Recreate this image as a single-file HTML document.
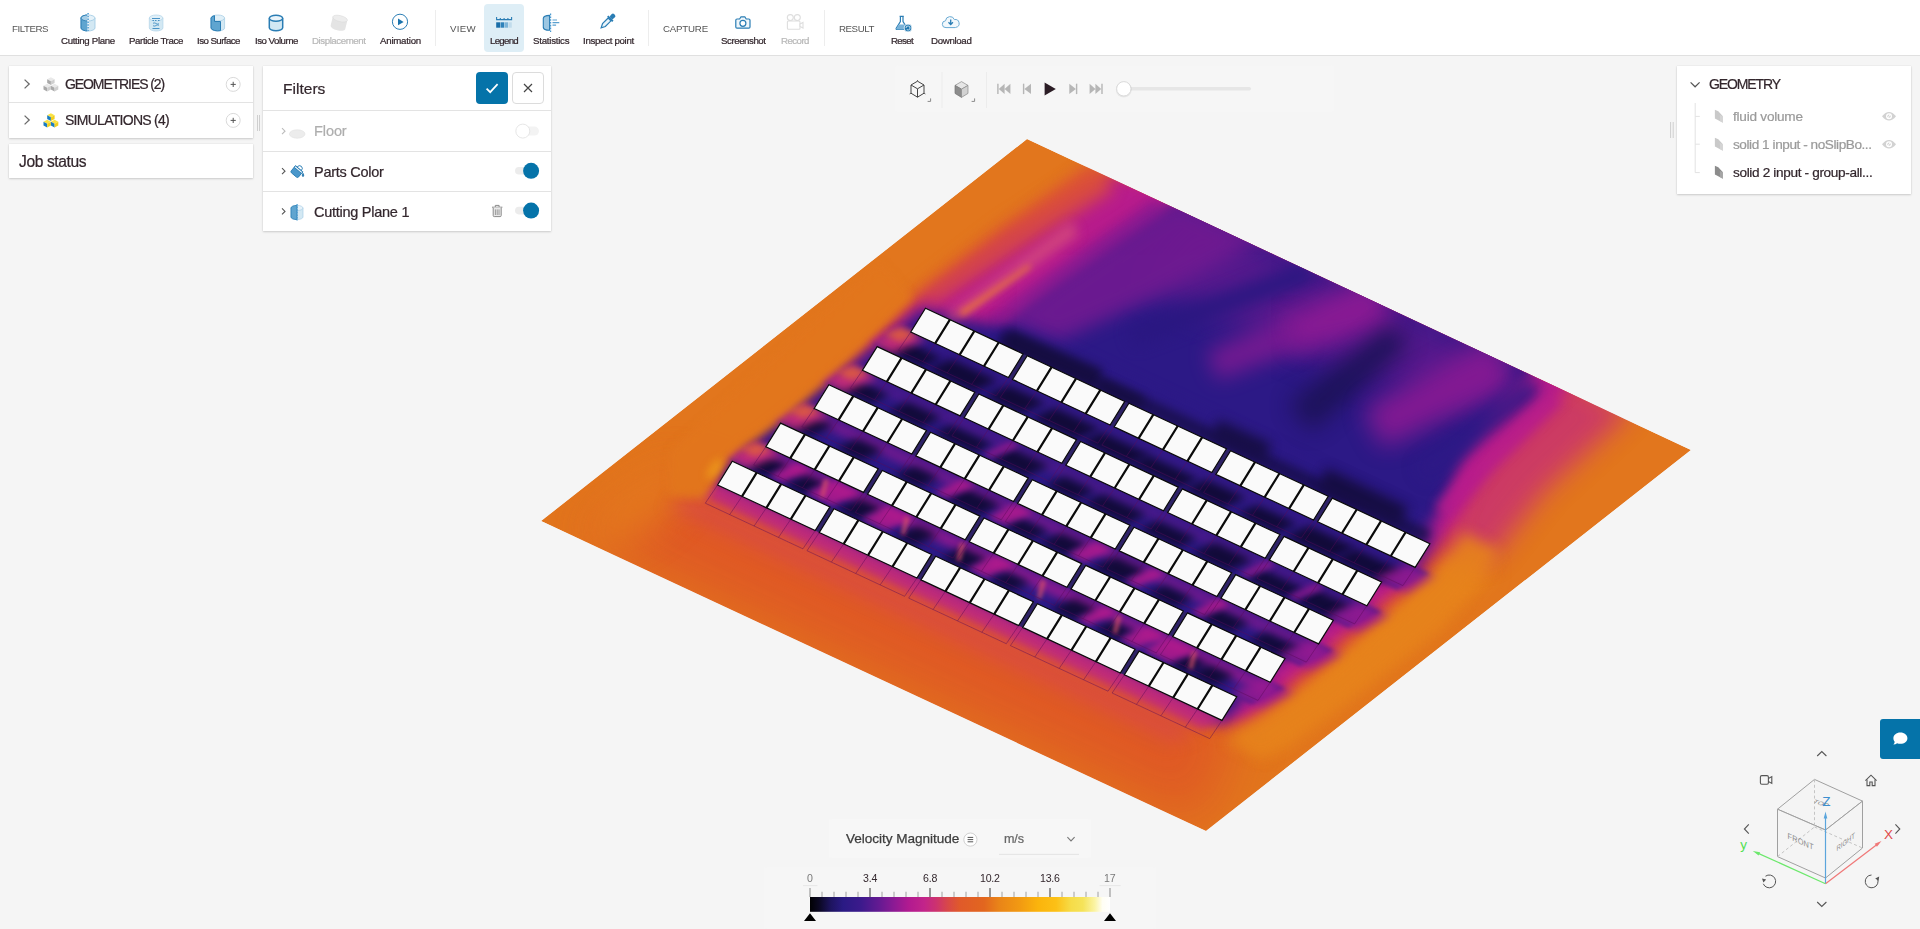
<!DOCTYPE html>
<html lang="en">
<head>
<meta charset="utf-8">
<title>Post-processor</title>
<style>
*{box-sizing:border-box;margin:0;padding:0}
html,body{width:1920px;height:929px;overflow:hidden;background:#f5f5f5;font-family:"Liberation Sans",sans-serif;color:#33272d}
.abs{position:absolute}
.t{position:absolute;white-space:nowrap;will-change:transform;-webkit-text-stroke:.22px currentColor}
#topbar{position:absolute;left:0;top:0;width:1920px;height:56px;background:#fff;border-bottom:1px solid #e0e0e0}
.sep{position:absolute;top:10px;width:1px;height:36px;background:#ededed}
.panel{position:absolute;background:#fff;box-shadow:0 1px 2px rgba(0,0,0,.16),0 0 1px rgba(0,0,0,.12)}
.hl{position:absolute;left:0;right:0;height:1px;background:#e3e3e3}
</style>
</head>
<body>

<!-- scene -->
<svg class="abs" style="left:0;top:0" width="1920" height="929" viewBox="0 0 1920 929"><defs><filter id="f0" filterUnits="userSpaceOnUse" color-interpolation-filters="sRGB" x="495" y="390" width="825" height="515"><feGaussianBlur stdDeviation="26"/></filter><filter id="f1" filterUnits="userSpaceOnUse" color-interpolation-filters="sRGB" x="534" y="407" width="211" height="196"><feGaussianBlur stdDeviation="18"/></filter><filter id="f2" filterUnits="userSpaceOnUse" color-interpolation-filters="sRGB" x="1217" y="509" width="312" height="279"><feGaussianBlur stdDeviation="12"/></filter><filter id="f3" filterUnits="userSpaceOnUse" color-interpolation-filters="sRGB" x="681" y="141" width="960" height="616"><feGaussianBlur stdDeviation="9"/></filter><filter id="f4" filterUnits="userSpaceOnUse" color-interpolation-filters="sRGB" x="1404" y="321" width="269" height="280"><feGaussianBlur stdDeviation="13"/></filter><filter id="f5" filterUnits="userSpaceOnUse" color-interpolation-filters="sRGB" x="691" y="153" width="917" height="594"><feGaussianBlur stdDeviation="7"/></filter><filter id="f6" filterUnits="userSpaceOnUse" color-interpolation-filters="sRGB" x="693" y="181" width="866" height="564"><feGaussianBlur stdDeviation="7"/></filter><filter id="f7" filterUnits="userSpaceOnUse" color-interpolation-filters="sRGB" x="1090" y="166" width="480" height="289"><feGaussianBlur stdDeviation="16"/></filter><filter id="f8" filterUnits="userSpaceOnUse" color-interpolation-filters="sRGB" x="898" y="136" width="243" height="196"><feGaussianBlur stdDeviation="8"/></filter><filter id="f9" filterUnits="userSpaceOnUse" color-interpolation-filters="sRGB" x="967" y="178" width="218" height="168"><feGaussianBlur stdDeviation="6"/></filter><filter id="f10" filterUnits="userSpaceOnUse" color-interpolation-filters="sRGB" x="927" y="202" width="172" height="140"><feGaussianBlur stdDeviation="6"/></filter><filter id="f11" filterUnits="userSpaceOnUse" color-interpolation-filters="sRGB" x="948" y="253" width="94" height="74"><feGaussianBlur stdDeviation="3"/></filter><filter id="f12" filterUnits="userSpaceOnUse" color-interpolation-filters="sRGB" x="973" y="171" width="318" height="198"><feGaussianBlur stdDeviation="9"/></filter><filter id="f13" filterUnits="userSpaceOnUse" color-interpolation-filters="sRGB" x="1102" y="236" width="238" height="137"><feGaussianBlur stdDeviation="8"/></filter><filter id="f14" filterUnits="userSpaceOnUse" color-interpolation-filters="sRGB" x="1174" y="281" width="164" height="131"><feGaussianBlur stdDeviation="10"/></filter><filter id="f15" filterUnits="userSpaceOnUse" color-interpolation-filters="sRGB" x="1249" y="240" width="180" height="146"><feGaussianBlur stdDeviation="11"/></filter><filter id="f16" filterUnits="userSpaceOnUse" color-interpolation-filters="sRGB" x="1253" y="288" width="191" height="179"><feGaussianBlur stdDeviation="11"/></filter><filter id="f17" filterUnits="userSpaceOnUse" color-interpolation-filters="sRGB" x="1325" y="301" width="229" height="185"><feGaussianBlur stdDeviation="12"/></filter><filter id="f18" filterUnits="userSpaceOnUse" color-interpolation-filters="sRGB" x="1389" y="351" width="180" height="157"><feGaussianBlur stdDeviation="8"/></filter><filter id="f19" filterUnits="userSpaceOnUse" color-interpolation-filters="sRGB" x="1415" y="369" width="168" height="168"><feGaussianBlur stdDeviation="6"/></filter><filter id="f20" filterUnits="userSpaceOnUse" color-interpolation-filters="sRGB" x="943" y="292" width="523" height="311"><feGaussianBlur stdDeviation="10"/></filter><filter id="f21" filterUnits="userSpaceOnUse" color-interpolation-filters="sRGB" x="983" y="317" width="462" height="241"><feGaussianBlur stdDeviation="4"/></filter><filter id="f22" filterUnits="userSpaceOnUse" color-interpolation-filters="sRGB" x="985" y="312" width="135" height="93"><feGaussianBlur stdDeviation="5"/></filter><filter id="f23" filterUnits="userSpaceOnUse" color-interpolation-filters="sRGB" x="1079" y="361" width="83" height="67"><feGaussianBlur stdDeviation="5"/></filter><filter id="f24" filterUnits="userSpaceOnUse" color-interpolation-filters="sRGB" x="1191" y="400" width="100" height="80"><feGaussianBlur stdDeviation="6"/></filter><filter id="f25" filterUnits="userSpaceOnUse" color-interpolation-filters="sRGB" x="1297" y="448" width="131" height="97"><feGaussianBlur stdDeviation="6"/></filter><filter id="f26" filterUnits="userSpaceOnUse" color-interpolation-filters="sRGB" x="864" y="322" width="574" height="275"><feGaussianBlur stdDeviation="2"/></filter><filter id="f27" filterUnits="userSpaceOnUse" color-interpolation-filters="sRGB" x="816" y="360" width="574" height="275"><feGaussianBlur stdDeviation="2"/></filter><filter id="f28" filterUnits="userSpaceOnUse" color-interpolation-filters="sRGB" x="768" y="398" width="574" height="275"><feGaussianBlur stdDeviation="2"/></filter><filter id="f29" filterUnits="userSpaceOnUse" color-interpolation-filters="sRGB" x="719" y="436" width="574" height="275"><feGaussianBlur stdDeviation="2"/></filter><filter id="f30" filterUnits="userSpaceOnUse" color-interpolation-filters="sRGB" x="880" y="318" width="559" height="275"><feGaussianBlur stdDeviation="4"/></filter><filter id="f31" filterUnits="userSpaceOnUse" color-interpolation-filters="sRGB" x="832" y="356" width="559" height="275"><feGaussianBlur stdDeviation="4"/></filter><filter id="f32" filterUnits="userSpaceOnUse" color-interpolation-filters="sRGB" x="783" y="394" width="559" height="275"><feGaussianBlur stdDeviation="4"/></filter><filter id="f33" filterUnits="userSpaceOnUse" color-interpolation-filters="sRGB" x="735" y="433" width="559" height="275"><feGaussianBlur stdDeviation="4"/></filter><filter id="f34" filterUnits="userSpaceOnUse" color-interpolation-filters="sRGB" x="865" y="324" width="91" height="57"><feGaussianBlur stdDeviation="4"/></filter><filter id="f35" filterUnits="userSpaceOnUse" color-interpolation-filters="sRGB" x="913" y="345" width="99" height="60"><feGaussianBlur stdDeviation="4"/></filter><filter id="f36" filterUnits="userSpaceOnUse" color-interpolation-filters="sRGB" x="970" y="372" width="90" height="56"><feGaussianBlur stdDeviation="4"/></filter><filter id="f37" filterUnits="userSpaceOnUse" color-interpolation-filters="sRGB" x="1018" y="394" width="97" height="59"><feGaussianBlur stdDeviation="4"/></filter><filter id="f38" filterUnits="userSpaceOnUse" color-interpolation-filters="sRGB" x="1067" y="418" width="97" height="60"><feGaussianBlur stdDeviation="4"/></filter><filter id="f39" filterUnits="userSpaceOnUse" color-interpolation-filters="sRGB" x="1116" y="442" width="97" height="59"><feGaussianBlur stdDeviation="4"/></filter><filter id="f40" filterUnits="userSpaceOnUse" color-interpolation-filters="sRGB" x="1170" y="465" width="90" height="56"><feGaussianBlur stdDeviation="4"/></filter><filter id="f41" filterUnits="userSpaceOnUse" color-interpolation-filters="sRGB" x="1223" y="491" width="89" height="56"><feGaussianBlur stdDeviation="4"/></filter><filter id="f42" filterUnits="userSpaceOnUse" color-interpolation-filters="sRGB" x="1271" y="512" width="99" height="60"><feGaussianBlur stdDeviation="4"/></filter><filter id="f43" filterUnits="userSpaceOnUse" color-interpolation-filters="sRGB" x="1319" y="535" width="100" height="61"><feGaussianBlur stdDeviation="4"/></filter><filter id="f44" filterUnits="userSpaceOnUse" color-interpolation-filters="sRGB" x="819" y="364" width="85" height="54"><feGaussianBlur stdDeviation="4"/></filter><filter id="f45" filterUnits="userSpaceOnUse" color-interpolation-filters="sRGB" x="873" y="388" width="83" height="53"><feGaussianBlur stdDeviation="4"/></filter><filter id="f46" filterUnits="userSpaceOnUse" color-interpolation-filters="sRGB" x="919" y="411" width="87" height="55"><feGaussianBlur stdDeviation="4"/></filter><filter id="f47" filterUnits="userSpaceOnUse" color-interpolation-filters="sRGB" x="975" y="435" width="88" height="55"><feGaussianBlur stdDeviation="4"/></filter><filter id="f48" filterUnits="userSpaceOnUse" color-interpolation-filters="sRGB" x="972" y="430" width="60" height="39"><feGaussianBlur stdDeviation="3"/></filter><filter id="f49" filterUnits="userSpaceOnUse" color-interpolation-filters="sRGB" x="1031" y="463" width="78" height="51"><feGaussianBlur stdDeviation="4"/></filter><filter id="f50" filterUnits="userSpaceOnUse" color-interpolation-filters="sRGB" x="1069" y="480" width="92" height="57"><feGaussianBlur stdDeviation="4"/></filter><filter id="f51" filterUnits="userSpaceOnUse" color-interpolation-filters="sRGB" x="1125" y="507" width="86" height="55"><feGaussianBlur stdDeviation="4"/></filter><filter id="f52" filterUnits="userSpaceOnUse" color-interpolation-filters="sRGB" x="1177" y="529" width="90" height="56"><feGaussianBlur stdDeviation="4"/></filter><filter id="f53" filterUnits="userSpaceOnUse" color-interpolation-filters="sRGB" x="1231" y="556" width="87" height="55"><feGaussianBlur stdDeviation="4"/></filter><filter id="f54" filterUnits="userSpaceOnUse" color-interpolation-filters="sRGB" x="1228" y="550" width="59" height="38"><feGaussianBlur stdDeviation="3"/></filter><filter id="f55" filterUnits="userSpaceOnUse" color-interpolation-filters="sRGB" x="1280" y="576" width="89" height="56"><feGaussianBlur stdDeviation="4"/></filter><filter id="f56" filterUnits="userSpaceOnUse" color-interpolation-filters="sRGB" x="1277" y="573" width="59" height="38"><feGaussianBlur stdDeviation="3"/></filter><filter id="f57" filterUnits="userSpaceOnUse" color-interpolation-filters="sRGB" x="770" y="400" width="78" height="51"><feGaussianBlur stdDeviation="4"/></filter><filter id="f58" filterUnits="userSpaceOnUse" color-interpolation-filters="sRGB" x="822" y="425" width="76" height="50"><feGaussianBlur stdDeviation="4"/></filter><filter id="f59" filterUnits="userSpaceOnUse" color-interpolation-filters="sRGB" x="880" y="452" width="74" height="49"><feGaussianBlur stdDeviation="4"/></filter><filter id="f60" filterUnits="userSpaceOnUse" color-interpolation-filters="sRGB" x="930" y="475" width="85" height="54"><feGaussianBlur stdDeviation="4"/></filter><filter id="f61" filterUnits="userSpaceOnUse" color-interpolation-filters="sRGB" x="923" y="468" width="63" height="40"><feGaussianBlur stdDeviation="3"/></filter><filter id="f62" filterUnits="userSpaceOnUse" color-interpolation-filters="sRGB" x="989" y="504" width="75" height="49"><feGaussianBlur stdDeviation="4"/></filter><filter id="f63" filterUnits="userSpaceOnUse" color-interpolation-filters="sRGB" x="976" y="493" width="68" height="43"><feGaussianBlur stdDeviation="3"/></filter><filter id="f64" filterUnits="userSpaceOnUse" color-interpolation-filters="sRGB" x="1025" y="519" width="77" height="50"><feGaussianBlur stdDeviation="4"/></filter><filter id="f65" filterUnits="userSpaceOnUse" color-interpolation-filters="sRGB" x="1057" y="531" width="68" height="42"><feGaussianBlur stdDeviation="3"/></filter><filter id="f66" filterUnits="userSpaceOnUse" color-interpolation-filters="sRGB" x="1077" y="543" width="84" height="53"><feGaussianBlur stdDeviation="4"/></filter><filter id="f67" filterUnits="userSpaceOnUse" color-interpolation-filters="sRGB" x="1114" y="557" width="63" height="40"><feGaussianBlur stdDeviation="3"/></filter><filter id="f68" filterUnits="userSpaceOnUse" color-interpolation-filters="sRGB" x="1133" y="571" width="75" height="49"><feGaussianBlur stdDeviation="4"/></filter><filter id="f69" filterUnits="userSpaceOnUse" color-interpolation-filters="sRGB" x="1185" y="595" width="78" height="51"><feGaussianBlur stdDeviation="4"/></filter><filter id="f70" filterUnits="userSpaceOnUse" color-interpolation-filters="sRGB" x="1180" y="588" width="62" height="40"><feGaussianBlur stdDeviation="3"/></filter><filter id="f71" filterUnits="userSpaceOnUse" color-interpolation-filters="sRGB" x="1234" y="618" width="82" height="52"><feGaussianBlur stdDeviation="4"/></filter><filter id="f72" filterUnits="userSpaceOnUse" color-interpolation-filters="sRGB" x="729" y="441" width="75" height="49"><feGaussianBlur stdDeviation="4"/></filter><filter id="f73" filterUnits="userSpaceOnUse" color-interpolation-filters="sRGB" x="758" y="452" width="66" height="42"><feGaussianBlur stdDeviation="3"/></filter><filter id="f74" filterUnits="userSpaceOnUse" color-interpolation-filters="sRGB" x="770" y="461" width="71" height="47"><feGaussianBlur stdDeviation="4"/></filter><filter id="f75" filterUnits="userSpaceOnUse" color-interpolation-filters="sRGB" x="796" y="470" width="77" height="47"><feGaussianBlur stdDeviation="3"/></filter><filter id="f76" filterUnits="userSpaceOnUse" color-interpolation-filters="sRGB" x="822" y="484" width="75" height="49"><feGaussianBlur stdDeviation="4"/></filter><filter id="f77" filterUnits="userSpaceOnUse" color-interpolation-filters="sRGB" x="851" y="495" width="75" height="46"><feGaussianBlur stdDeviation="3"/></filter><filter id="f78" filterUnits="userSpaceOnUse" color-interpolation-filters="sRGB" x="880" y="511" width="73" height="48"><feGaussianBlur stdDeviation="4"/></filter><filter id="f79" filterUnits="userSpaceOnUse" color-interpolation-filters="sRGB" x="926" y="534" width="76" height="50"><feGaussianBlur stdDeviation="4"/></filter><filter id="f80" filterUnits="userSpaceOnUse" color-interpolation-filters="sRGB" x="957" y="545" width="70" height="44"><feGaussianBlur stdDeviation="3"/></filter><filter id="f81" filterUnits="userSpaceOnUse" color-interpolation-filters="sRGB" x="974" y="558" width="70" height="47"><feGaussianBlur stdDeviation="4"/></filter><filter id="f82" filterUnits="userSpaceOnUse" color-interpolation-filters="sRGB" x="1036" y="585" width="76" height="50"><feGaussianBlur stdDeviation="4"/></filter><filter id="f83" filterUnits="userSpaceOnUse" color-interpolation-filters="sRGB" x="1066" y="596" width="63" height="40"><feGaussianBlur stdDeviation="3"/></filter><filter id="f84" filterUnits="userSpaceOnUse" color-interpolation-filters="sRGB" x="1080" y="607" width="70" height="47"><feGaussianBlur stdDeviation="4"/></filter><filter id="f85" filterUnits="userSpaceOnUse" color-interpolation-filters="sRGB" x="1108" y="615" width="70" height="43"><feGaussianBlur stdDeviation="3"/></filter><filter id="f86" filterUnits="userSpaceOnUse" color-interpolation-filters="sRGB" x="1153" y="641" width="69" height="46"><feGaussianBlur stdDeviation="4"/></filter><filter id="f87" filterUnits="userSpaceOnUse" color-interpolation-filters="sRGB" x="1131" y="626" width="78" height="47"><feGaussianBlur stdDeviation="3"/></filter><filter id="f88" filterUnits="userSpaceOnUse" color-interpolation-filters="sRGB" x="1175" y="651" width="74" height="49"><feGaussianBlur stdDeviation="4"/></filter><filter id="f89" filterUnits="userSpaceOnUse" color-interpolation-filters="sRGB" x="853" y="313" width="87" height="54"><feGaussianBlur stdDeviation="4"/></filter><filter id="f90" filterUnits="userSpaceOnUse" color-interpolation-filters="sRGB" x="873" y="316" width="55" height="37"><feGaussianBlur stdDeviation="3"/></filter><filter id="f91" filterUnits="userSpaceOnUse" color-interpolation-filters="sRGB" x="1357" y="547" width="100" height="64"><feGaussianBlur stdDeviation="5"/></filter><filter id="f92" filterUnits="userSpaceOnUse" color-interpolation-filters="sRGB" x="805" y="352" width="87" height="54"><feGaussianBlur stdDeviation="4"/></filter><filter id="f93" filterUnits="userSpaceOnUse" color-interpolation-filters="sRGB" x="825" y="355" width="55" height="37"><feGaussianBlur stdDeviation="3"/></filter><filter id="f94" filterUnits="userSpaceOnUse" color-interpolation-filters="sRGB" x="1309" y="585" width="100" height="64"><feGaussianBlur stdDeviation="5"/></filter><filter id="f95" filterUnits="userSpaceOnUse" color-interpolation-filters="sRGB" x="757" y="390" width="87" height="54"><feGaussianBlur stdDeviation="4"/></filter><filter id="f96" filterUnits="userSpaceOnUse" color-interpolation-filters="sRGB" x="776" y="393" width="55" height="37"><feGaussianBlur stdDeviation="3"/></filter><filter id="f97" filterUnits="userSpaceOnUse" color-interpolation-filters="sRGB" x="1260" y="623" width="100" height="64"><feGaussianBlur stdDeviation="5"/></filter><filter id="f98" filterUnits="userSpaceOnUse" color-interpolation-filters="sRGB" x="708" y="428" width="87" height="54"><feGaussianBlur stdDeviation="4"/></filter><filter id="f99" filterUnits="userSpaceOnUse" color-interpolation-filters="sRGB" x="728" y="431" width="55" height="37"><feGaussianBlur stdDeviation="3"/></filter><filter id="f100" filterUnits="userSpaceOnUse" color-interpolation-filters="sRGB" x="1212" y="662" width="100" height="64"><feGaussianBlur stdDeviation="5"/></filter><filter id="f101" filterUnits="userSpaceOnUse" color-interpolation-filters="sRGB" x="812" y="471" width="25" height="35"><feGaussianBlur stdDeviation="2"/></filter><filter id="f102" filterUnits="userSpaceOnUse" color-interpolation-filters="sRGB" x="893" y="509" width="25" height="35"><feGaussianBlur stdDeviation="2"/></filter><filter id="f103" filterUnits="userSpaceOnUse" color-interpolation-filters="sRGB" x="948" y="534" width="25" height="35"><feGaussianBlur stdDeviation="2"/></filter><filter id="f104" filterUnits="userSpaceOnUse" color-interpolation-filters="sRGB" x="1029" y="572" width="25" height="35"><feGaussianBlur stdDeviation="2"/></filter><filter id="f105" filterUnits="userSpaceOnUse" color-interpolation-filters="sRGB" x="1105" y="607" width="25" height="35"><feGaussianBlur stdDeviation="2"/></filter><filter id="f106" filterUnits="userSpaceOnUse" color-interpolation-filters="sRGB" x="1181" y="643" width="25" height="35"><feGaussianBlur stdDeviation="2"/></filter><filter id="f107" filterUnits="userSpaceOnUse" color-interpolation-filters="sRGB" x="680" y="467" width="563" height="280"><feGaussianBlur stdDeviation="5"/></filter><filter id="f108" filterUnits="userSpaceOnUse" color-interpolation-filters="sRGB" x="638" y="466" width="589" height="305"><feGaussianBlur stdDeviation="9"/></filter><filter id="f109" filterUnits="userSpaceOnUse" color-interpolation-filters="sRGB" x="654" y="248" width="272" height="265"><feGaussianBlur stdDeviation="4"/></filter><filter id="f110" filterUnits="userSpaceOnUse" color-interpolation-filters="sRGB" x="693" y="445" width="44" height="48"><feGaussianBlur stdDeviation="4"/></filter><filter id="f111" filterUnits="userSpaceOnUse" color-interpolation-filters="sRGB" x="1203" y="509" width="320" height="274"><feGaussianBlur stdDeviation="7"/></filter><clipPath id="plate"><polygon points="1027.0,139.0 1691.0,450.0 1206.0,831.0 541.0,521.0"/></clipPath></defs><g clip-path="url(#plate)"><polygon points="1027.0,139.0 1691.0,450.0 1206.0,831.0 541.0,521.0" fill="#e2761d"/><polygon points="680.0,470.0 1240.0,722.0 1200.0,825.0 575.0,535.0" fill="#df5825" filter="url(#f0)" opacity="0.95"/><polygon points="687.3,468.1 689.7,474.4 688.6,482.9 684.3,492.8 677.0,503.6 667.1,514.5 655.4,524.7 642.6,533.6 629.7,540.5 617.5,545.1 606.7,546.8 598.3,545.8 592.7,541.9 590.3,535.6 591.4,527.1 595.7,517.2 603.0,506.4 612.9,495.5 624.6,485.3 637.4,476.4 650.3,469.5 662.5,464.9 673.3,463.2 681.7,464.2" fill="#e6841c" filter="url(#f1)" opacity="0.6"/><polygon points="1269.0,750.4 1490.9,573.0 1469.1,547.0 1255.0,733.6" fill="#ee9418" filter="url(#f2)" opacity="0.7"/><polygon points="710.0,492.0 716.0,478.0 756.0,447.0 813.0,400.0 870.0,343.0 916.0,296.0 1003.0,229.0 1093.0,170.0 1230.0,195.0 1612.0,378.0 1556.0,419.0 1506.0,468.0 1474.0,525.0 1424.0,582.0 1375.0,623.0 1310.0,681.0 1262.0,722.0 1222.0,728.0" fill="#d9463c" filter="url(#f3)"/><polygon points="1530.0,362.0 1632.0,410.0 1545.0,490.0 1490.0,560.0 1445.0,560.0 1461.0,470.0" fill="#cb3868" filter="url(#f4)" opacity="0.95"/><polygon points="714.0,490.0 723.0,472.0 763.0,444.0 819.0,398.0 876.0,342.0 921.0,300.0 1012.0,236.0 1112.0,176.0 1230.0,200.0 1585.0,372.0 1538.0,415.0 1490.0,462.0 1458.0,520.0 1410.0,578.0 1360.0,620.0 1296.0,676.0 1250.0,716.0 1222.0,724.0" fill="#b81c8c" filter="url(#f5)"/><polygon points="716.0,489.0 730.0,462.0 923.0,309.0 975.0,322.0 1004.0,326.0 1061.0,285.0 1125.0,241.0 1180.0,204.0 1536.0,366.0 1502.0,403.0 1461.0,460.0 1440.0,512.0 1384.0,572.0 1334.0,613.0 1270.0,670.0 1236.0,708.0 1222.0,722.0" fill="#2c1986" filter="url(#f6)"/><polygon points="1195.0,216.0 1520.0,366.0 1480.0,405.0 1330.0,365.0 1230.0,320.0 1140.0,285.0" fill="#701a91" filter="url(#f7)" opacity="0.6"/><polygon points="932.0,305.7 1114.8,189.9 1095.2,162.1 924.0,294.3" fill="#dc5238" filter="url(#f8)" opacity="0.75"/><polygon points="992.8,326.1 1165.6,214.3 1154.4,197.7 987.2,317.9" fill="#8a1a93" filter="url(#f9)" opacity="0.7"/><polygon points="952.9,322.1 1079.1,233.7 1070.9,222.3 947.1,313.9" fill="#d9507a" filter="url(#f10)" opacity="0.8"/><polygon points="962.7,316.5 1031.1,267.6 1028.9,264.4 959.3,311.5" fill="#e8743a" filter="url(#f11)" opacity="0.9"/><polygon points="1002.0,322.0 1053.0,283.0 1117.0,239.0 1177.0,200.0 1262.0,240.0 1150.0,300.0 1060.0,340.0" fill="#701a91" filter="url(#f12)" opacity="0.92"/><polygon points="1134.4,346.4 1313.8,282.3 1306.2,261.7 1127.6,327.6" fill="#2a1781" filter="url(#f13)" opacity="0.95"/><polygon points="1217.7,379.9 1306.8,346.7 1293.2,313.3 1206.3,352.1" fill="#781a92" filter="url(#f14)" opacity="0.9"/><polygon points="1296.1,350.9 1394.1,325.4 1375.9,274.6 1283.9,317.1" fill="#8c1a94" filter="url(#f15)" opacity="0.92"/><polygon points="1311.6,431.8 1409.0,344.7 1391.0,323.3 1288.4,404.2" fill="#1d1258" filter="url(#f16)" opacity="0.95"/><polygon points="1382.8,447.7 1516.6,385.3 1493.4,338.7 1363.2,408.3" fill="#861a93" filter="url(#f17)" opacity="0.95"/><polygon points="1427.1,481.9 1542.7,394.7 1529.3,377.3 1414.9,466.1" fill="#2e1986" filter="url(#f18)" opacity="0.9"/><polygon points="1444.9,516.9 1563.1,403.1 1548.9,388.9 1435.1,507.1" fill="#b81c8c" filter="url(#f19)" opacity="0.85"/><polygon points="975.3,365.8 1415.3,570.8 1434.7,529.2 994.7,324.2" fill="#2c1986" filter="url(#f20)" opacity="0.9"/><polygon points="997.0,343.3 1425.0,543.3 1431.0,530.7 1003.0,330.7" fill="#150d40" filter="url(#f21)" opacity="0.7"/><polygon points="1002.0,347.2 1095.0,388.2 1103.0,369.8 1010.0,328.8" fill="#150d40" filter="url(#f22)" opacity="0.95"/><polygon points="1096.0,390.3 1139.0,410.3 1145.0,397.7 1102.0,377.7" fill="#150d40" filter="url(#f23)" opacity="0.85"/><polygon points="1211.3,436.2 1264.3,460.2 1271.7,443.8 1218.7,419.8" fill="#150d40" filter="url(#f24)" opacity="0.9"/><polygon points="1317.4,488.0 1399.8,525.1 1408.2,506.9 1326.6,468.0" fill="#150d40" filter="url(#f25)" opacity="0.95"/><polygon points="905.8,329.6 1430.3,574.4 1396.7,588.9 872.2,344.2" fill="#2c1986" filter="url(#f26)"/><polygon points="857.5,367.9 1382.0,612.6 1348.4,627.2 823.9,382.4" fill="#2c1986" filter="url(#f27)"/><polygon points="809.2,406.1 1333.7,650.9 1300.1,665.4 775.6,420.7" fill="#2c1986" filter="url(#f28)"/><polygon points="760.9,444.4 1285.4,689.1 1251.8,703.7 727.3,458.9" fill="#2c1986" filter="url(#f29)"/><polygon points="910.8,332.0 1425.3,572.0 1408.5,579.3 894.0,339.3" fill="#3c1a8a" filter="url(#f30)" opacity="0.55"/><polygon points="862.5,370.2 1377.0,610.3 1360.2,617.5 845.7,377.5" fill="#5a1a8e" filter="url(#f31)" opacity="0.6"/><polygon points="814.2,408.5 1328.7,648.5 1311.9,655.8 797.4,415.8" fill="#861a92" filter="url(#f32)" opacity="0.7"/><polygon points="765.9,446.8 1280.4,686.8 1263.6,694.0 749.1,454.0" fill="#9c1a92" filter="url(#f33)" opacity="0.8"/><polygon points="898.9,337.9 942.0,358.0 921.8,366.8 878.7,346.7" fill="#0f0932" filter="url(#f34)" opacity="0.92"/><polygon points="951.5,358.9 998.5,380.8 974.3,391.3 927.3,369.3" fill="#0f0932" filter="url(#f35)" opacity="0.92"/><polygon points="1008.4,385.5 1046.2,403.1 1022.1,413.6 984.3,395.9" fill="#0f0932" filter="url(#f36)" opacity="0.92"/><polygon points="1055.2,407.7 1100.2,428.7 1076.5,438.9 1031.5,417.9" fill="#0f0932" filter="url(#f37)" opacity="0.92"/><polygon points="1102.0,432.2 1150.7,455.0 1130.1,463.9 1081.3,441.2" fill="#0f0932" filter="url(#f38)" opacity="0.92"/><polygon points="1148.8,455.8 1198.6,479.0 1179.8,487.1 1130.1,463.9" fill="#0f0932" filter="url(#f39)" opacity="0.92"/><polygon points="1206.5,479.4 1246.3,497.9 1223.8,507.6 1184.0,489.1" fill="#0f0932" filter="url(#f40)" opacity="0.92"/><polygon points="1256.9,504.9 1297.3,523.7 1277.1,532.5 1236.6,513.6" fill="#0f0932" filter="url(#f41)" opacity="0.92"/><polygon points="1308.9,525.6 1356.1,547.7 1332.0,558.1 1284.8,536.1" fill="#0f0932" filter="url(#f42)" opacity="0.92"/><polygon points="1355.9,549.1 1405.6,572.3 1383.2,582.0 1333.5,558.8" fill="#0f0932" filter="url(#f43)" opacity="0.92"/><polygon points="852.2,377.8 889.5,395.2 870.4,403.5 833.0,386.1" fill="#0f0932" filter="url(#f44)" opacity="0.92"/><polygon points="907.8,402.1 941.9,418.0 920.9,427.1 886.8,411.2" fill="#0f0932" filter="url(#f45)" opacity="0.92"/><polygon points="951.3,425.2 992.9,444.5 974.9,452.3 933.4,432.9" fill="#0f0932" filter="url(#f46)" opacity="0.92"/><polygon points="1012.7,448.8 1049.5,465.9 1026.0,476.1 989.1,458.9" fill="#0f0932" filter="url(#f47)" opacity="0.92"/><polygon points="1011.3,441.2 1020.4,445.4 991.8,457.8 982.8,453.6" fill="#981a92" filter="url(#f48)" opacity="0.85"/><polygon points="1064.2,476.5 1095.3,491.0 1075.9,499.4 1044.8,484.9" fill="#0f0932" filter="url(#f49)" opacity="0.92"/><polygon points="1103.2,494.3 1147.0,514.7 1127.1,523.3 1083.3,502.9" fill="#0f0932" filter="url(#f50)" opacity="0.92"/><polygon points="1157.9,520.7 1197.2,539.0 1178.3,547.2 1139.0,528.9" fill="#0f0932" filter="url(#f51)" opacity="0.92"/><polygon points="1215.0,542.6 1252.7,560.2 1228.5,570.6 1190.9,553.1" fill="#0f0932" filter="url(#f52)" opacity="0.92"/><polygon points="1263.8,570.0 1304.1,588.8 1285.1,597.0 1244.8,578.2" fill="#0f0932" filter="url(#f53)" opacity="0.92"/><polygon points="1267.6,560.7 1276.1,564.7 1247.5,577.1 1239.1,573.1" fill="#981a92" filter="url(#f54)" opacity="0.85"/><polygon points="1317.9,590.4 1354.2,607.3 1329.8,617.9 1293.5,600.9" fill="#0f0932" filter="url(#f55)" opacity="0.92"/><polygon points="1316.4,583.5 1324.8,587.4 1296.2,599.8 1287.9,595.9" fill="#981a92" filter="url(#f56)" opacity="0.85"/><polygon points="808.0,413.5 834.3,425.8 810.2,436.2 783.9,424.0" fill="#0f0932" filter="url(#f57)" opacity="0.92"/><polygon points="857.7,438.7 883.4,450.7 861.5,460.2 835.8,448.2" fill="#0f0932" filter="url(#f58)" opacity="0.92"/><polygon points="914.4,466.1 939.6,477.9 918.8,486.9 893.6,475.2" fill="#0f0932" filter="url(#f59)" opacity="0.92"/><polygon points="967.1,489.1 1001.2,505.0 978.6,514.8 944.5,498.9" fill="#0f0932" filter="url(#f60)" opacity="0.92"/><polygon points="963.0,479.4 975.7,485.4 947.1,497.7 934.5,491.8" fill="#b01a8e" filter="url(#f61)" opacity="0.85"/><polygon points="1020.7,518.2 1049.2,531.5 1031.1,539.3 1002.6,526.0" fill="#0f0932" filter="url(#f62)" opacity="0.92"/><polygon points="1015.9,504.1 1033.8,512.5 1005.3,524.8 987.4,516.5" fill="#b01a8e" filter="url(#f63)" opacity="0.85"/><polygon points="1061.6,532.9 1088.0,545.2 1065.0,555.1 1038.7,542.8" fill="#0f0932" filter="url(#f64)" opacity="0.92"/><polygon points="1096.3,541.6 1113.5,549.6 1085.0,562.0 1067.7,554.0" fill="#b01a8e" filter="url(#f65)" opacity="0.85"/><polygon points="1115.5,556.6 1146.8,571.2 1122.3,581.8 1091.0,567.2" fill="#0f0932" filter="url(#f66)" opacity="0.92"/><polygon points="1153.5,568.3 1166.4,574.3 1137.9,586.7 1125.0,580.7" fill="#b01a8e" filter="url(#f67)" opacity="0.85"/><polygon points="1164.7,585.3 1193.4,598.7 1175.2,606.5 1146.6,593.2" fill="#0f0932" filter="url(#f68)" opacity="0.92"/><polygon points="1219.4,609.2 1249.8,623.4 1229.9,632.0 1199.4,617.8" fill="#0f0932" filter="url(#f69)" opacity="0.92"/><polygon points="1219.3,599.0 1230.7,604.3 1202.1,616.7 1190.8,611.4" fill="#b01a8e" filter="url(#f70)" opacity="0.85"/><polygon points="1266.2,632.2 1301.3,648.6 1282.7,656.7 1247.6,640.3" fill="#0f0932" filter="url(#f71)" opacity="0.92"/><polygon points="767.0,455.4 790.3,466.3 766.5,476.6 743.1,465.7" fill="#0f0932" filter="url(#f72)" opacity="0.92"/><polygon points="797.7,463.1 813.0,470.2 784.5,482.6 769.2,475.5" fill="#b41a8c" filter="url(#f73)" opacity="0.85"/><polygon points="806.8,474.7 827.0,484.1 803.8,494.1 783.7,484.7" fill="#0f0932" filter="url(#f74)" opacity="0.92"/><polygon points="835.1,480.5 861.8,493.0 833.3,505.4 806.5,492.9" fill="#b41a8c" filter="url(#f75)" opacity="0.85"/><polygon points="860.6,498.5 883.4,509.1 858.9,519.7 836.0,509.1" fill="#0f0932" filter="url(#f76)" opacity="0.92"/><polygon points="890.1,506.2 914.7,517.7 886.2,530.1 861.6,518.6" fill="#b41a8c" filter="url(#f77)" opacity="0.85"/><polygon points="918.1,525.5 938.6,535.0 914.3,545.6 893.8,536.0" fill="#0f0932" filter="url(#f78)" opacity="0.92"/><polygon points="962.7,547.6 988.2,559.5 965.3,569.4 939.8,557.5" fill="#0f0932" filter="url(#f79)" opacity="0.92"/><polygon points="996.6,555.9 1016.4,565.1 987.9,577.5 968.0,568.2" fill="#b41a8c" filter="url(#f80)" opacity="0.85"/><polygon points="1007.2,572.0 1030.2,582.7 1011.4,590.9 988.3,580.1" fill="#0f0932" filter="url(#f81)" opacity="0.92"/><polygon points="1074.0,598.5 1098.1,609.8 1074.1,620.1 1050.0,608.9" fill="#0f0932" filter="url(#f82)" opacity="0.92"/><polygon points="1105.4,606.6 1118.1,612.6 1089.6,624.9 1076.8,619.0" fill="#b41a8c" filter="url(#f83)" opacity="0.85"/><polygon points="1112.7,621.1 1135.6,631.8 1116.6,640.0 1093.7,629.3" fill="#0f0932" filter="url(#f84)" opacity="0.92"/><polygon points="1147.9,626.4 1166.9,635.3 1138.4,647.7 1119.3,638.8" fill="#b41a8c" filter="url(#f85)" opacity="0.85"/><polygon points="1188.4,654.6 1208.1,663.8 1187.1,672.9 1167.4,663.7" fill="#0f0932" filter="url(#f86)" opacity="0.92"/><polygon points="1171.0,637.2 1198.7,650.1 1170.1,662.5 1142.5,649.6" fill="#b41a8c" filter="url(#f87)" opacity="0.85"/><polygon points="1210.2,664.8 1235.0,676.3 1214.0,685.4 1189.2,673.8" fill="#0f0932" filter="url(#f88)" opacity="0.92"/><polygon points="900.7,327.3 925.9,339.1 892.3,353.6 867.1,341.8" fill="#c62c7c" filter="url(#f89)" opacity="0.95"/><polygon points="900.7,327.3 916.9,334.8 900.1,342.1 883.9,334.6" fill="#e0603a" filter="url(#f90)" opacity="0.8"/><polygon points="1407.6,563.8 1440.4,579.1 1406.8,593.6 1374.0,578.3" fill="#9a1a92" filter="url(#f91)" opacity="0.85"/><polygon points="852.4,365.5 877.6,377.3 844.0,391.9 818.8,380.1" fill="#c62c7c" filter="url(#f92)" opacity="0.95"/><polygon points="852.4,365.5 868.6,373.1 851.8,380.3 835.6,372.8" fill="#e0603a" filter="url(#f93)" opacity="0.8"/><polygon points="1359.3,602.0 1392.1,617.3 1358.5,631.9 1325.7,616.6" fill="#9a1a92" filter="url(#f94)" opacity="0.85"/><polygon points="804.1,403.8 829.3,415.6 795.7,430.1 770.5,418.3" fill="#c62c7c" filter="url(#f95)" opacity="0.95"/><polygon points="804.1,403.8 820.3,411.3 803.5,418.6 787.3,411.1" fill="#e0603a" filter="url(#f96)" opacity="0.8"/><polygon points="1311.0,640.3 1343.8,655.6 1310.2,670.1 1277.4,654.8" fill="#9a1a92" filter="url(#f97)" opacity="0.85"/><polygon points="755.8,442.0 781.0,453.8 747.4,468.4 722.2,456.6" fill="#c62c7c" filter="url(#f98)" opacity="0.95"/><polygon points="755.8,442.0 772.0,449.6 755.2,456.8 739.0,449.3" fill="#e0603a" filter="url(#f99)" opacity="0.8"/><polygon points="1262.7,678.5 1295.5,693.8 1261.9,708.4 1229.1,693.1" fill="#9a1a92" filter="url(#f100)" opacity="0.85"/><polygon points="824.0,478.9 820.3,496.8 824.2,497.7 828.9,480.1" fill="#d8506a" filter="url(#f101)" opacity="0.8"/><polygon points="904.7,516.6 901.0,534.4 904.9,535.3 909.6,517.7" fill="#d8506a" filter="url(#f102)" opacity="0.8"/><polygon points="960.2,542.5 956.5,560.3 960.4,561.2 965.1,543.6" fill="#d8506a" filter="url(#f103)" opacity="0.8"/><polygon points="1040.9,580.1 1037.2,597.9 1041.1,598.9 1045.8,581.3" fill="#d8506a" filter="url(#f104)" opacity="0.8"/><polygon points="1116.6,615.4 1112.9,633.2 1116.7,634.2 1121.4,616.6" fill="#d8506a" filter="url(#f105)" opacity="0.8"/><polygon points="1192.2,650.7 1188.5,668.5 1192.4,669.4 1197.1,651.9" fill="#d8506a" filter="url(#f106)" opacity="0.8"/><polygon points="721.0,483.5 1225.4,718.8 1201.2,729.3 696.8,494.0" fill="#c02a80" filter="url(#f107)" opacity="0.9"/><polygon points="694.1,495.2 1198.5,730.5 1171.6,742.1 667.2,506.8" fill="#d64450" filter="url(#f108)" opacity="0.6"/><polygon points="704.0,499.0 712.0,485.0 723.0,463.0 744.0,443.0 766.0,428.0 787.0,413.0 809.0,392.0 863.0,344.0 912.0,297.0 880.0,262.0 670.0,450.0 668.0,494.0" fill="#e2761d" filter="url(#f109)" opacity="0.96"/><polygon points="719.1,471.9 717.2,474.3 715.1,476.4 713.0,478.0 711.1,478.9 709.4,479.2 708.1,478.8 707.3,477.8 707.0,476.1 707.2,473.9 708.0,471.4 709.3,468.8 710.9,466.1 712.8,463.7 714.9,461.6 717.0,460.0 718.9,459.1 720.6,458.8 721.9,459.2 722.7,460.2 723.0,461.9 722.8,464.1 722.0,466.6 720.7,469.2" fill="#f0a21a" filter="url(#f110)" opacity="0.75"/><polygon points="1226.0,742.0 1240.0,729.0 1286.0,701.0 1331.0,668.0 1368.0,635.0 1404.0,604.0 1434.0,574.0 1453.0,550.0 1464.0,532.0 1500.0,552.0 1440.0,630.0 1330.0,715.0 1262.0,760.0" fill="#e6821c" filter="url(#f111)" opacity="0.9"/><path d="M910.8,332.0 L898.5,350.2 L996.1,395.8 L1008.4,377.6 M935.2,343.4 l-12.3,18.2 M959.6,354.8 l-12.3,18.2 M984.0,366.2 l-12.3,18.2 M1012.5,379.4 L1000.2,397.6 L1097.8,443.2 L1110.1,425.1 M1036.9,390.8 l-12.3,18.2 M1061.3,402.2 l-12.3,18.2 M1085.7,413.6 l-12.3,18.2 M1114.2,426.9 L1101.9,445.1 L1199.5,490.7 L1211.8,472.5 M1138.6,438.3 l-12.3,18.2 M1163.0,449.7 l-12.3,18.2 M1187.4,461.1 l-12.3,18.2 M1215.9,474.4 L1203.6,492.6 L1301.2,538.2 L1313.5,520.0 M1240.3,485.8 l-12.3,18.2 M1264.7,497.2 l-12.3,18.2 M1289.1,508.6 l-12.3,18.2 M1317.6,521.8 L1305.3,540.0 L1402.9,585.6 L1415.2,567.4 M1342.0,533.2 l-12.3,18.2 M1366.4,544.6 l-12.3,18.2 M1390.8,556.0 l-12.3,18.2 M862.5,370.2 L850.2,388.4 L947.8,434.1 L960.1,415.9 M886.9,381.6 l-12.3,18.2 M911.3,393.1 l-12.3,18.2 M935.7,404.4 l-12.3,18.2 M964.2,417.7 L951.9,435.9 L1049.5,481.5 L1061.8,463.3 M988.6,429.1 l-12.3,18.2 M1013.0,440.5 l-12.3,18.2 M1037.4,451.9 l-12.3,18.2 M1065.9,465.2 L1053.6,483.4 L1151.2,529.0 L1163.5,510.8 M1090.3,476.6 l-12.3,18.2 M1114.7,488.0 l-12.3,18.2 M1139.1,499.4 l-12.3,18.2 M1167.6,512.6 L1155.3,530.8 L1252.9,576.4 L1265.2,558.2 M1192.0,524.0 l-12.3,18.2 M1216.4,535.4 l-12.3,18.2 M1240.8,546.8 l-12.3,18.2 M1269.3,560.1 L1257.0,578.3 L1354.6,623.9 L1366.9,605.7 M1293.7,571.5 l-12.3,18.2 M1318.1,582.9 l-12.3,18.2 M1342.5,594.3 l-12.3,18.2 M814.2,408.5 L801.9,426.7 L899.5,472.3 L911.8,454.1 M838.6,419.9 l-12.3,18.2 M863.0,431.3 l-12.3,18.2 M887.4,442.7 l-12.3,18.2 M915.9,455.9 L903.6,474.1 L1001.2,519.8 L1013.5,501.6 M940.3,467.3 l-12.3,18.2 M964.7,478.8 l-12.3,18.2 M989.1,490.1 l-12.3,18.2 M1017.6,503.4 L1005.3,521.6 L1102.9,567.2 L1115.2,549.0 M1042.0,514.8 l-12.3,18.2 M1066.4,526.2 l-12.3,18.2 M1090.8,537.6 l-12.3,18.2 M1119.3,550.9 L1107.0,569.1 L1204.6,614.7 L1216.9,596.5 M1143.7,562.3 l-12.3,18.2 M1168.1,573.7 l-12.3,18.2 M1192.5,585.1 l-12.3,18.2 M1221.0,598.3 L1208.7,616.5 L1306.3,662.1 L1318.6,643.9 M1245.4,609.7 l-12.3,18.2 M1269.8,621.1 l-12.3,18.2 M1294.2,632.5 l-12.3,18.2 M765.9,446.8 L753.6,464.9 L851.2,510.6 L863.5,492.4 M790.3,458.1 l-12.3,18.2 M814.7,469.6 l-12.3,18.2 M839.1,480.9 l-12.3,18.2 M867.6,494.2 L855.3,512.4 L952.9,558.0 L965.2,539.8 M892.0,505.6 l-12.3,18.2 M916.4,517.0 l-12.3,18.2 M940.8,528.4 l-12.3,18.2 M969.3,541.7 L957.0,559.9 L1054.6,605.5 L1066.9,587.3 M993.7,553.1 l-12.3,18.2 M1018.1,564.5 l-12.3,18.2 M1042.5,575.9 l-12.3,18.2 M1071.0,589.1 L1058.7,607.3 L1156.3,652.9 L1168.6,634.7 M1095.4,600.5 l-12.3,18.2 M1119.8,611.9 l-12.3,18.2 M1144.2,623.3 l-12.3,18.2 M1172.7,636.6 L1160.4,654.8 L1258.0,700.4 L1270.3,682.2 M1197.1,648.0 l-12.3,18.2 M1221.5,659.4 l-12.3,18.2 M1245.9,670.8 l-12.3,18.2 M717.6,485.0 L705.3,503.2 L802.9,548.8 L815.2,530.6 M742.0,496.4 l-12.3,18.2 M766.4,507.8 l-12.3,18.2 M790.8,519.2 l-12.3,18.2 M819.3,532.5 L807.0,550.7 L904.6,596.3 L916.9,578.1 M843.7,543.9 l-12.3,18.2 M868.1,555.2 l-12.3,18.2 M892.5,566.7 l-12.3,18.2 M921.0,579.9 L908.7,598.1 L1006.3,643.7 L1018.6,625.5 M945.4,591.3 l-12.3,18.2 M969.8,602.7 l-12.3,18.2 M994.2,614.1 l-12.3,18.2 M1022.7,627.4 L1010.4,645.6 L1108.0,691.2 L1120.3,673.0 M1047.1,638.8 l-12.3,18.2 M1071.5,650.2 l-12.3,18.2 M1095.9,661.6 l-12.3,18.2 M1124.4,674.8 L1112.1,693.0 L1209.7,738.6 L1222.0,720.4 M1148.8,686.2 l-12.3,18.2 M1173.2,697.6 l-12.3,18.2 M1197.6,709.0 l-12.3,18.2" fill="none" stroke="#5a0c58" stroke-width=".9" opacity=".5"/></g><path d="M1023.1,353.9 L1027.2,355.8 L1012.5,379.4 L1008.4,377.6Z M1124.8,401.4 L1128.9,403.2 L1114.2,426.9 L1110.1,425.1Z M1226.5,448.8 L1230.6,450.7 L1215.9,474.4 L1211.8,472.5Z M1328.2,496.3 L1332.3,498.1 L1317.6,521.8 L1313.5,520.0Z M974.8,392.2 L978.9,394.0 L964.2,417.7 L960.1,415.9Z M1076.5,439.6 L1080.6,441.4 L1065.9,465.1 L1061.8,463.3Z M1178.2,487.1 L1182.3,488.9 L1167.6,512.6 L1163.5,510.8Z M1279.9,534.5 L1284.0,536.4 L1269.3,560.1 L1265.2,558.2Z M926.5,430.4 L930.6,432.2 L915.9,455.9 L911.8,454.1Z M1028.2,477.9 L1032.3,479.7 L1017.6,503.4 L1013.5,501.6Z M1129.9,525.3 L1134.0,527.2 L1119.3,550.9 L1115.2,549.0Z M1231.6,572.8 L1235.7,574.6 L1221.0,598.3 L1216.9,596.5Z M878.2,468.7 L882.3,470.5 L867.6,494.2 L863.5,492.4Z M979.9,516.1 L984.0,518.0 L969.3,541.7 L965.2,539.8Z M1081.6,563.6 L1085.7,565.4 L1071.0,589.1 L1066.9,587.3Z M1183.3,611.0 L1187.4,612.9 L1172.7,636.6 L1168.6,634.7Z M829.9,506.9 L834.0,508.8 L819.3,532.5 L815.2,530.6Z M931.6,554.4 L935.7,556.2 L921.0,579.9 L916.9,578.1Z M1033.3,601.8 L1037.4,603.7 L1022.7,627.4 L1018.6,625.5Z M1135.0,649.3 L1139.1,651.1 L1124.4,674.8 L1120.3,673.0Z" fill="#2e2266"/><path d="M925.5,308.3 L1023.1,353.9 L1008.4,377.6 L910.8,332.0Z M1027.2,355.8 L1124.8,401.4 L1110.1,425.1 L1012.5,379.4Z M1128.9,403.2 L1226.5,448.8 L1211.8,472.5 L1114.2,426.9Z M1230.6,450.7 L1328.2,496.3 L1313.5,520.0 L1215.9,474.4Z M1332.3,498.1 L1429.9,543.7 L1415.2,567.4 L1317.6,521.8Z M877.2,346.6 L974.8,392.2 L960.1,415.9 L862.5,370.2Z M978.9,394.0 L1076.5,439.6 L1061.8,463.3 L964.2,417.7Z M1080.6,441.5 L1178.2,487.1 L1163.5,510.8 L1065.9,465.2Z M1182.3,488.9 L1279.9,534.5 L1265.2,558.2 L1167.6,512.6Z M1284.0,536.4 L1381.6,582.0 L1366.9,605.7 L1269.3,560.1Z M828.9,384.8 L926.5,430.4 L911.8,454.1 L814.2,408.5Z M930.6,432.2 L1028.2,477.9 L1013.5,501.6 L915.9,455.9Z M1032.3,479.7 L1129.9,525.3 L1115.2,549.0 L1017.6,503.4Z M1134.0,527.2 L1231.6,572.8 L1216.9,596.5 L1119.3,550.9Z M1235.7,574.6 L1333.3,620.2 L1318.6,643.9 L1221.0,598.3Z M780.6,423.1 L878.2,468.7 L863.5,492.4 L765.9,446.8Z M882.3,470.5 L979.9,516.1 L965.2,539.8 L867.6,494.2Z M984.0,518.0 L1081.6,563.6 L1066.9,587.3 L969.3,541.7Z M1085.7,565.4 L1183.3,611.0 L1168.6,634.7 L1071.0,589.1Z M1187.4,612.9 L1285.0,658.5 L1270.3,682.2 L1172.7,636.6Z M732.3,461.3 L829.9,506.9 L815.2,530.6 L717.6,485.0Z M834.0,508.8 L931.6,554.4 L916.9,578.1 L819.3,532.5Z M935.7,556.2 L1033.3,601.8 L1018.6,625.5 L921.0,579.9Z M1037.4,603.7 L1135.0,649.3 L1120.3,673.0 L1022.7,627.4Z M1139.1,651.1 L1236.7,696.7 L1222.0,720.4 L1124.4,674.8Z" fill="#fafafa" stroke="#0a0a0a" stroke-width="1.2" stroke-linejoin="miter"/><path d="M949.9,319.7 l-14.7,23.7 M974.3,331.1 l-14.7,23.7 M998.7,342.5 l-14.7,23.7 M1051.6,367.1 l-14.7,23.7 M1076.0,378.6 l-14.7,23.7 M1100.4,389.9 l-14.7,23.7 M1153.3,414.6 l-14.7,23.7 M1177.7,426.0 l-14.7,23.7 M1202.1,437.4 l-14.7,23.7 M1255.0,462.1 l-14.7,23.7 M1279.4,473.5 l-14.7,23.7 M1303.8,484.9 l-14.7,23.7 M1356.7,509.5 l-14.7,23.7 M1381.1,520.9 l-14.7,23.7 M1405.5,532.3 l-14.7,23.7 M901.6,357.9 l-14.7,23.7 M926.0,369.4 l-14.7,23.7 M950.4,380.8 l-14.7,23.7 M1003.3,405.4 l-14.7,23.7 M1027.7,416.8 l-14.7,23.7 M1052.1,428.2 l-14.7,23.7 M1105.0,452.9 l-14.7,23.7 M1129.4,464.3 l-14.7,23.7 M1153.8,475.7 l-14.7,23.7 M1206.7,500.3 l-14.7,23.7 M1231.1,511.7 l-14.7,23.7 M1255.5,523.1 l-14.7,23.7 M1308.4,547.8 l-14.7,23.7 M1332.8,559.1 l-14.7,23.7 M1357.2,570.6 l-14.7,23.7 M853.3,396.2 l-14.7,23.7 M877.7,407.6 l-14.7,23.7 M902.1,419.0 l-14.7,23.7 M955.0,443.6 l-14.7,23.7 M979.4,455.1 l-14.7,23.7 M1003.8,466.4 l-14.7,23.7 M1056.7,491.1 l-14.7,23.7 M1081.1,502.5 l-14.7,23.7 M1105.5,513.9 l-14.7,23.7 M1158.4,538.6 l-14.7,23.7 M1182.8,550.0 l-14.7,23.7 M1207.2,561.4 l-14.7,23.7 M1260.1,586.0 l-14.7,23.7 M1284.5,597.4 l-14.7,23.7 M1308.9,608.8 l-14.7,23.7 M805.0,434.4 l-14.7,23.7 M829.4,445.9 l-14.7,23.7 M853.8,457.2 l-14.7,23.7 M906.7,481.9 l-14.7,23.7 M931.1,493.3 l-14.7,23.7 M955.5,504.7 l-14.7,23.7 M1008.4,529.4 l-14.7,23.7 M1032.8,540.8 l-14.7,23.7 M1057.2,552.2 l-14.7,23.7 M1110.1,576.8 l-14.7,23.7 M1134.5,588.2 l-14.7,23.7 M1158.9,599.6 l-14.7,23.7 M1211.8,624.2 l-14.7,23.7 M1236.2,635.6 l-14.7,23.7 M1260.6,647.1 l-14.7,23.7 M756.7,472.7 l-14.7,23.7 M781.1,484.1 l-14.7,23.7 M805.5,495.5 l-14.7,23.7 M858.4,520.1 l-14.7,23.7 M882.8,531.5 l-14.7,23.7 M907.2,543.0 l-14.7,23.7 M960.1,567.6 l-14.7,23.7 M984.5,579.0 l-14.7,23.7 M1008.9,590.4 l-14.7,23.7 M1061.8,615.1 l-14.7,23.7 M1086.2,626.5 l-14.7,23.7 M1110.6,637.9 l-14.7,23.7 M1163.5,662.5 l-14.7,23.7 M1187.9,673.9 l-14.7,23.7 M1212.3,685.3 l-14.7,23.7" fill="none" stroke="#0a0a0a" stroke-width="2.2"/></svg>
<!-- topbar -->
<div id="topbar">
<div class="abs" style="left:484px;top:4px;width:40px;height:48px;background:#deeef6;border-radius:4px"></div>
<span class="t" style="left:12.0px;top:22.6px;font-size:9.7px;line-height:12px;letter-spacing:-0.452px;color:#555;-webkit-text-stroke:0;">FILTERS</span>
<span class="t" style="left:450.0px;top:22.6px;font-size:9.7px;line-height:12px;letter-spacing:0.302px;color:#555;-webkit-text-stroke:0;">VIEW</span>
<span class="t" style="left:663.0px;top:22.6px;font-size:9.7px;line-height:12px;letter-spacing:-0.193px;color:#555;-webkit-text-stroke:0;">CAPTURE</span>
<span class="t" style="left:839.0px;top:22.6px;font-size:9.7px;line-height:12px;letter-spacing:-0.425px;color:#555;-webkit-text-stroke:0;">RESULT</span>
<span class="t" style="left:61.0px;top:35.0px;font-size:9.7px;line-height:12px;letter-spacing:-0.326px;color:#33272d;">Cutting Plane</span>
<span class="t" style="left:129.0px;top:35.0px;font-size:9.7px;line-height:12px;letter-spacing:-0.378px;color:#33272d;">Particle Trace</span>
<span class="t" style="left:197.0px;top:35.0px;font-size:9.7px;line-height:12px;letter-spacing:-0.551px;color:#33272d;">Iso Surface</span>
<span class="t" style="left:254.5px;top:35.0px;font-size:9.7px;line-height:12px;letter-spacing:-0.499px;color:#33272d;">Iso Volume</span>
<span class="t" style="left:312.0px;top:35.0px;font-size:9.7px;line-height:12px;letter-spacing:-0.438px;color:#b8b8b8;">Displacement</span>
<span class="t" style="left:380.0px;top:35.0px;font-size:9.7px;line-height:12px;letter-spacing:-0.237px;color:#33272d;">Animation</span>
<span class="t" style="left:489.6px;top:35.0px;font-size:9.7px;line-height:12px;letter-spacing:-0.727px;color:#33272d;">Legend</span>
<span class="t" style="left:532.7px;top:35.0px;font-size:9.7px;line-height:12px;letter-spacing:-0.251px;color:#33272d;">Statistics</span>
<span class="t" style="left:583.0px;top:35.0px;font-size:9.7px;line-height:12px;letter-spacing:-0.308px;color:#33272d;">Inspect point</span>
<span class="t" style="left:721.0px;top:35.0px;font-size:9.7px;line-height:12px;letter-spacing:-0.447px;color:#33272d;">Screenshot</span>
<span class="t" style="left:780.6px;top:35.0px;font-size:9.7px;line-height:12px;letter-spacing:-0.545px;color:#b8b8b8;">Record</span>
<span class="t" style="left:890.7px;top:35.0px;font-size:9.7px;line-height:12px;letter-spacing:-0.668px;color:#33272d;">Reset</span>
<span class="t" style="left:930.6px;top:35.0px;font-size:9.7px;line-height:12px;letter-spacing:-0.330px;color:#33272d;">Download</span>
<div class="sep" style="left:434.5px"></div>
<div class="sep" style="left:647.5px"></div>
<div class="sep" style="left:823.5px"></div>
<svg class="abs" style="left:0;top:0" width="1000" height="56" viewBox="0 0 1000 56"><path d="M81,18 V28 A7.0,3 0 0 0 95,28 V18" fill="#d3e8f3" stroke="#9cc8e2" stroke-width="0.8"/><ellipse cx="88.0" cy="18" rx="7.0" ry="3" fill="#e6f2f9" stroke="#9cc8e2" stroke-width="0.8"/><path d="M81,18 V28 A7,3 0 0 0 88,31 V15 A7,3 0 0 0 81,18Z" fill="#5fa5d0" stroke="#2a7db4" stroke-width="1"/><path d="M81,18 A7,3 0 0 0 88,21 V15 A7,3 0 0 0 81,18Z" fill="#a5cde6" stroke="#2a7db4" stroke-width=".8"/><line x1="88.1" y1="13" x2="88.1" y2="32.5" stroke="#fff" stroke-width="1.6"/><line x1="88.1" y1="13" x2="88.1" y2="32.5" stroke="#58a3d6" stroke-width="1.6" stroke-dasharray="1.5 1.3"/><path d="M149.3,18 V28 A6.8,3 0 0 0 162.9,28 V18" fill="#d3e8f3" stroke="#b5d6ea" stroke-width="0.8"/><ellipse cx="156.10000000000002" cy="18" rx="6.8" ry="3" fill="#e1f0f8" stroke="#b5d6ea" stroke-width="0.8"/><path d="M152,18.5h8M152.5,20.5h1.5M155,20.5h1.5M158,20.5h1.5M153,23.5c2,-2 4,2 6,0M153,25.5c2,2 4,-2 6,0M152.5,28.5h7" stroke="#4a93c6" stroke-width="1" fill="none"/><path d="M211,18 V28 A6.8,3 0 0 0 224.6,28 V18" fill="#d3e8f3" stroke="#a9cfe6" stroke-width="0.8"/><ellipse cx="217.8" cy="18" rx="6.8" ry="3" fill="#e1f0f8" stroke="#a9cfe6" stroke-width="0.8"/><path d="M211,18 V28 A6.8,3 0 0 0 220.5,30.6 V21.5 H214.5 V15.6 A6.8,3 0 0 0 211,18Z" fill="#5fa5d0" stroke="#2a7db4" stroke-width="1"/><path d="M269.3,18.3 V27.700000000000003 A6.7,3 0 0 0 282.7,27.700000000000003 V18.3" fill="#d3e8f3" stroke="#2a7db4" stroke-width="1.5"/><ellipse cx="276.0" cy="18.3" rx="6.7" ry="3" fill="#eaf4fa" stroke="#2a7db4" stroke-width="1.5"/><g transform="rotate(14 339 23)"><path d="M331.5,18.5 V27.5 A7.5,3 0 0 0 346.5,27.5 V18.5" fill="#e4e4e4"/><ellipse cx="339" cy="18.5" rx="7.5" ry="3" fill="#ededed" stroke="#dcdcdc" stroke-width=".6"/></g><circle cx="400" cy="21.8" r="7.6" fill="#fff" stroke="#2a7db4" stroke-width="1"/><path d="M398,18.6 L403.6,21.9 L398,25.2Z" fill="#1a73ad"/><path d="M496.6,17 V19.6 H511.6 V17 M500.3,18 V19.6 M504.1,18 V19.6 M507.9,18 V19.6" stroke="#2a7db4" stroke-width="1.1" fill="none"/><rect x="496.2" y="22.3" width="4.2" height="5.4" fill="#1a6ea8"/><rect x="500.9" y="22.3" width="3.4" height="5.4" fill="#2f82ba"/><rect x="504.8" y="22.3" width="3.2" height="5.4" fill="#7db4d8"/><rect x="508.4" y="22.3" width="3.4" height="5.4" fill="#c1dcec"/><path d="M549.6,15.4 A6.6,3 0 0 0 543.3,18.3 V27.4 A6.6,3 0 0 0 549.6,30.3Z" fill="#9cc7e2" stroke="#2a7db4" stroke-width="1.1"/><line x1="550.6" y1="13.6" x2="550.6" y2="32" stroke="#4a9ad0" stroke-width="1.2" stroke-dasharray="1.6 1.2"/><path d="M552.5,20 h4.5 M552.5,22.6 h6.8 M552.5,25.2 h3.6" stroke="#5aa0cf" stroke-width="1.2"/><g transform="rotate(45 607.5 21.5)"><rect x="605.3" y="11.6" width="4.4" height="5.2" rx="1.6" fill="#2a7db4"/><rect x="603.9" y="16.6" width="7.2" height="1.9" fill="#2a7db4"/><path d="M605.5,18.6 V26.5 L607.5,30.5 L609.5,26.5 V18.6Z" fill="#e9f3f9" stroke="#2a7db4" stroke-width="1.2"/></g><path d="M737,19 h2.6 l1.4,-2.2 h3.8 l1.4,2.2 h2.6 a1.2,1.2 0 0 1 1.2,1.2 v6.8 a1.2,1.2 0 0 1 -1.2,1.2 h-11.8 a1.2,1.2 0 0 1 -1.2,-1.2 v-6.8 a1.2,1.2 0 0 1 1.2,-1.2z" fill="#eef6fb" stroke="#2a7db4" stroke-width="1.2"/><circle cx="742.9" cy="23.3" r="3" fill="#fff" stroke="#2a7db4" stroke-width="1.2"/><g fill="#fff" stroke="#dedede" stroke-width="1.1"><circle cx="790.3" cy="17.6" r="3"/><circle cx="797.3" cy="17.6" r="3"/><rect x="787.4" y="21" width="12.6" height="8.2" rx="1"/><path d="M800,24 l3,-1.6 v5.6 l-3,-1.6z"/></g><path d="M899.6,16.4 h4.2 M900.4,16.6 V21.5 L896.2,28.3 a0.8,0.8 0 0 0 .7,1.2 H906.6 a0.8,0.8 0 0 0 .7,-1.2 L903,21.5 V16.6" fill="none" stroke="#2a7db4" stroke-width="1.2"/><path d="M898.8,24.4 H904.7 L907,28.4 a.7,.7 0 0 1 -.6,1 H897 a.7,.7 0 0 1 -.6,-1z" fill="#79b2d8"/><circle cx="908" cy="28" r="3.9" fill="#1f77b0" stroke="#fff" stroke-width=".8"/><path d="M906,28 a2,2 0 1 1 .8,1.6" fill="none" stroke="#d8ebf6" stroke-width=".9"/><path d="M946,27.6 a3.4,3.4 0 0 1 -.5,-6.8 a4.6,4.6 0 0 1 8.9,-1.2 a3.9,3.9 0 0 1 1.6,7.7 q-.4,.3 -1,.3z" fill="#f2f8fc" stroke="#6aaad3" stroke-width="1"/><path d="M950.7,19.6 v4.2 m-2.2,-1.6 l2.2,2.4 l2.2,-2.4" fill="none" stroke="#2a7db4" stroke-width="1.3"/></svg>
</div>
<!-- left -->
<div class="panel" style="left:9px;top:66px;width:244px;height:72px"><div class="hl" style="top:36px"></div></div>
<div class="panel" style="left:9px;top:144px;width:244px;height:34px"></div>
<span class="t" style="left:65.3px;top:75.7px;font-size:14px;line-height:17px;letter-spacing:-1.096px;color:#33272d;">GEOMETRIES (2)</span>
<span class="t" style="left:65.3px;top:111.7px;font-size:14px;line-height:17px;letter-spacing:-0.724px;color:#33272d;">SIMULATIONS (4)</span>
<span class="t" style="left:19.2px;top:152.2px;font-size:15.6px;line-height:19px;letter-spacing:-0.390px;color:#33272d;">Job status</span>
<svg class="abs" style="left:0;top:56px" width="270" height="140" viewBox="0 56 270 140"><path d="M24.6,79.6 l4.6,4.4 l-4.6,4.4" fill="none" stroke="#6a6a6a" stroke-width="1.3"/><path d="M24.6,115.6 l4.6,4.4 l-4.6,4.4" fill="none" stroke="#6a6a6a" stroke-width="1.3"/><path d="M50.9,77.2 l3.7,2.035 l-3.7,2.035 l-3.7,-2.035z" fill="#e9e9e9"/><path d="M47.199999999999996,79.235 l3.7,2.035 v3.7 l-3.7,-2.035z" fill="#a9a9a9"/><path d="M54.6,79.235 l-3.7,2.035 v3.7 l3.7,-2.035z" fill="#cfcfcf"/><path d="M47.199999999999996,83.8 l3.7,2.035 l-3.7,2.035 l-3.7,-2.035z" fill="#e9e9e9"/><path d="M43.49999999999999,85.835 l3.7,2.035 v3.7 l-3.7,-2.035z" fill="#a9a9a9"/><path d="M50.9,85.835 l-3.7,2.035 v3.7 l3.7,-2.035z" fill="#cfcfcf"/><path d="M54.6,83.8 l3.7,2.035 l-3.7,2.035 l-3.7,-2.035z" fill="#e9e9e9"/><path d="M50.9,85.835 l3.7,2.035 v3.7 l-3.7,-2.035z" fill="#a9a9a9"/><path d="M58.300000000000004,85.835 l-3.7,2.035 v3.7 l3.7,-2.035z" fill="#cfcfcf"/><path d="M50.9,113.2 l3.7,2.035 l-3.7,2.035 l-3.7,-2.035z" fill="#f9e243"/><path d="M47.199999999999996,115.235 l3.7,2.035 v3.7 l-3.7,-2.035z" fill="#1b7cc0"/><path d="M54.6,115.235 l-3.7,2.035 v3.7 l3.7,-2.035z" fill="#f2cf1d"/><path d="M47.199999999999996,119.8 l3.7,2.035 l-3.7,2.035 l-3.7,-2.035z" fill="#f9e243"/><path d="M43.49999999999999,121.835 l3.7,2.035 v3.7 l-3.7,-2.035z" fill="#1b7cc0"/><path d="M50.9,121.835 l-3.7,2.035 v3.7 l3.7,-2.035z" fill="#f2cf1d"/><path d="M54.6,119.8 l3.7,2.035 l-3.7,2.035 l-3.7,-2.035z" fill="#f9e243"/><path d="M50.9,121.835 l3.7,2.035 v3.7 l-3.7,-2.035z" fill="#1b7cc0"/><path d="M58.300000000000004,121.835 l-3.7,2.035 v3.7 l3.7,-2.035z" fill="#f2cf1d"/><circle cx="233.2" cy="84.4" r="7" fill="#fff" stroke="#d9d9d9" stroke-width="1"/><path d="M230.6,84.4 h5.2 M233.2,81.80000000000001 v5.2" stroke="#555" stroke-width="1"/><circle cx="233.2" cy="120.4" r="7" fill="#fff" stroke="#d9d9d9" stroke-width="1"/><path d="M230.6,120.4 h5.2 M233.2,117.80000000000001 v5.2" stroke="#555" stroke-width="1"/><path d="M257.5,115 v16 M259.5,115 v16" stroke="#cfcfcf" stroke-width="1"/></svg>
<!-- filters -->
<div class="panel" style="left:263px;top:66px;width:288px;height:165px"><div class="hl" style="top:44px"></div><div class="hl" style="top:85px"></div><div class="hl" style="top:125px"></div><div class="abs" style="left:213px;top:6px;width:32px;height:32px;background:#0573a9;border-radius:4px"></div><div class="abs" style="left:249px;top:6px;width:32px;height:32px;background:#fff;border:1px solid #dcdcdc;border-radius:4px"></div></div>
<span class="t" style="left:283.4px;top:79.1px;font-size:15.5px;line-height:19px;letter-spacing:0.030px;color:#33272d;">Filters</span>
<span class="t" style="left:313.6px;top:122.7px;font-size:14.5px;line-height:17px;letter-spacing:-0.087px;color:#aeaeae;">Floor</span>
<span class="t" style="left:313.6px;top:163.5px;font-size:14.5px;line-height:17px;letter-spacing:-0.265px;color:#33272d;">Parts Color</span>
<span class="t" style="left:313.6px;top:203.7px;font-size:14.5px;line-height:17px;letter-spacing:-0.263px;color:#33272d;">Cutting Plane 1</span>
<svg class="abs" style="left:260px;top:60px" width="300" height="180" viewBox="260 60 300 180"><path d="M486.6,88.6 l3.6,3.6 l7.4,-8" fill="none" stroke="#fff" stroke-width="1.7"/><path d="M524,84 l8,8 M532,84 l-8,8" fill="none" stroke="#444" stroke-width="1.2"/><path d="M282,128.2 l3,3 l-3,3" fill="none" stroke="#bbb" stroke-width="1.1"/><path d="M282,168.2 l3,3 l-3,3" fill="none" stroke="#555" stroke-width="1.1"/><path d="M282,208.4 l3,3 l-3,3" fill="none" stroke="#555" stroke-width="1.1"/><ellipse cx="297.2" cy="134" rx="7.8" ry="4.2" fill="#ececec" stroke="#e0e0e0" stroke-width=".6"/><rect x="520" y="126.6" width="19" height="9" rx="4.5" fill="#f3f3f3"/><circle cx="522.8" cy="131.1" r="7" fill="#fff" stroke="#e6e6e6" stroke-width="1"/><rect x="515" y="167.0" width="20" height="7.6" rx="3.8" fill="#ececec"/><circle cx="531.1" cy="170.8" r="8" fill="#0573a9"/><rect x="515" y="206.79999999999998" width="20" height="7.6" rx="3.8" fill="#ececec"/><circle cx="531.1" cy="210.6" r="8" fill="#0573a9"/><g transform="rotate(40 297 171)"><path d="M292.5,168 h9.5 v6.5 a1.5,1.5 0 0 1 -1.5,1.5 h-6.5 a1.5,1.5 0 0 1 -1.5,-1.5z" fill="#4a97cb" stroke="#2a7db4" stroke-width=".9"/><path d="M292.5,168 h9.5 v2 h-9.5z" fill="#e4f0f8" stroke="#2a7db4" stroke-width=".9"/><path d="M294.5,168 a2.8,3.4 0 0 1 5.6,0" fill="none" stroke="#2a7db4" stroke-width=".9"/></g><path d="M303,173.2 q1.7,2.2 0,3.6 q-1.7,-1.4 0,-3.6z" fill="#1a6ea8" stroke="#1a6ea8" stroke-width=".6"/><path d="M291,208 V217 A6,2.6 0 0 0 303,217 V208" fill="#d3e8f3" stroke="#a9cfe6" stroke-width=".7"/><ellipse cx="297" cy="208" rx="6" ry="2.6" fill="#e6f2f9" stroke="#a9cfe6" stroke-width=".7"/><path d="M291,208 V217 A6,2.6 0 0 0 297,219.6 V205.4 A6,2.6 0 0 0 291,208Z" fill="#5fa5d0" stroke="#2a7db4" stroke-width=".8"/><line x1="297.1" y1="204" x2="297.1" y2="220.4" stroke="#4a9ad0" stroke-width="1.2" stroke-dasharray="1.5 1.1"/><g stroke="#8a8a8a" fill="none" stroke-width="1"><path d="M492,207.2 h10.4 M495.3,207 v-1.6 h3.8 v1.6"/><path d="M493.2,207.6 v8 a1,1 0 0 0 1,1 h6 a1,1 0 0 0 1,-1 v-8" fill="#e9e9e9"/><path d="M495.4,209.4 v5.6 M497.2,209.4 v5.6 M499,209.4 v5.6" stroke="#9a9a9a"/></g></svg>
<!-- playback -->
<svg class="abs" style="left:880px;top:60px" width="480" height="60" viewBox="880 60 480 60"><rect x="894.5" y="65.5" width="440" height="46.5" rx="3" fill="#f6f6f6"/><path d="M942,72 v36 M986.5,72 v36" stroke="#ececec" stroke-width="1"/><g fill="none" stroke="#444" stroke-width="1"><path d="M917.5,81.2 l6.5,3.8 v8.2 l-6.5,4 l-6.5,-4 v-8.2z"/><path d="M911.0,85.0 l6.5,3.8 l6.5,-3.8 M917.5,88.80000000000001 v8.4"/><path d="M911.0,93.2 l-1.4,.8 M924.0,93.2 l1.4,.8 M917.5,81.2 v-1.2" stroke="#666"/></g><path d="M927.6,101.4 h3 v-3" fill="none" stroke="#8a8a8a" stroke-width="1"/><path d="M961.5,81.60000000000001 l6.5,3.8 l-6.5,3.8 l-6.5,-3.8z" fill="#e6e6e6" stroke="#8a8a8a" stroke-width=".7"/><path d="M955.0,85.4 l6.5,3.8 v8.2 l-6.5,-4z" fill="#8c8c8c" stroke="#777" stroke-width=".7"/><path d="M968.0,85.4 l-6.5,3.8 v8.2 l6.5,-4z" fill="#d2d2d2" stroke="#8a8a8a" stroke-width=".7"/><path d="M971.6,101.4 h3 v-3" fill="none" stroke="#8a8a8a" stroke-width="1"/><path d="M997.9,83.7 v10.399999999999991" stroke="#b6b6b6" stroke-width="1.4"/><path d="M1004.6,83.7 V94.1 L998.8,88.9z M1010.4,83.7 V94.1 L1004.6,88.9z" fill="#b6b6b6"/><path d="M1023.6,83.7 v10.399999999999991" stroke="#b6b6b6" stroke-width="1.4"/><path d="M1031,83.7 V94.1 L1024.4,88.9z" fill="#b6b6b6"/><path d="M1044.6,82.6 V95.4 L1055.8,89z" fill="#2b1d25"/><path d="M1076.6,83.7 v10.399999999999991" stroke="#b6b6b6" stroke-width="1.4"/><path d="M1069.3,83.7 V94.1 L1075.9,88.9z" fill="#b6b6b6"/><path d="M1102,83.7 v10.399999999999991" stroke="#b6b6b6" stroke-width="1.4"/><path d="M1089.6,83.7 V94.1 L1095.4,88.9z M1095.4,83.7 V94.1 L1101.2,88.9z" fill="#b6b6b6"/><rect x="1124" y="87" width="127" height="3.6" rx="1.8" fill="#e6e6e6"/><circle cx="1123.8" cy="89.6" r="8" fill="#000" opacity=".06"/><circle cx="1123.8" cy="88.8" r="7.2" fill="#fff" stroke="#dadada" stroke-width="1"/></svg>
<!-- right -->
<div class="panel" style="left:1677px;top:66px;width:234px;height:128px"></div>
<span class="t" style="left:1709.3px;top:75.7px;font-size:14px;line-height:17px;letter-spacing:-1.108px;color:#33272d;">GEOMETRY</span>
<span class="t" style="left:1733.0px;top:108.8px;font-size:13.6px;line-height:16px;letter-spacing:-0.230px;color:#9a9a9a;">fluid volume</span>
<span class="t" style="left:1733.0px;top:136.8px;font-size:13.6px;line-height:16px;letter-spacing:-0.438px;color:#9a9a9a;">solid 1 input - noSlipBo...</span>
<span class="t" style="left:1733.0px;top:164.8px;font-size:13.6px;line-height:16px;letter-spacing:-0.340px;color:#33272d;">solid 2 input - group-all...</span>
<svg class="abs" style="left:1660px;top:60px" width="260" height="140" viewBox="1660 60 260 140"><path d="M1690.6,82.4 l4.5,4.4 l4.5,-4.4" fill="none" stroke="#555" stroke-width="1.2"/><path d="M1695.2,103 V172.6 H1699.8 M1695.2,116.4 H1699.8 M1695.2,144.2 H1699.8" fill="none" stroke="#e2e2e2" stroke-width="1"/><path d="M1714.9,109.8 l3.4,1.4 l4.6,5 v6.6 l-8,-4.2z" fill="#c9c9c9"/><path d="M1722.9,116.2 v6.6 l-3,-1.6 v-6.2z" fill="#dcdcdc" opacity=".6"/><path d="M1714.9,137.8 l3.4,1.4 l4.6,5 v6.6 l-8,-4.2z" fill="#c9c9c9"/><path d="M1722.9,144.20000000000002 v6.6 l-3,-1.6 v-6.2z" fill="#dcdcdc" opacity=".6"/><path d="M1714.9,165.8 l3.4,1.4 l4.6,5 v6.6 l-8,-4.2z" fill="#8c8c8c"/><path d="M1722.9,172.20000000000002 v6.6 l-3,-1.6 v-6.2z" fill="#b5b5b5" opacity=".6"/><path d="M1882,116.2 q7,-8.6 14,0 q-7,8.6 -14,0z" fill="#d2d2d2"/><circle cx="1889" cy="116.2" r="3" fill="#fff"/><circle cx="1889" cy="116.2" r="1.6" fill="#d2d2d2"/><path d="M1887.4,118.60000000000001 l3.2,-4.8" stroke="#fff" stroke-width=".9"/><path d="M1882,144.2 q7,-8.6 14,0 q-7,8.6 -14,0z" fill="#d2d2d2"/><circle cx="1889" cy="144.2" r="3" fill="#fff"/><circle cx="1889" cy="144.2" r="1.6" fill="#d2d2d2"/><path d="M1887.4,146.6 l3.2,-4.8" stroke="#fff" stroke-width=".9"/><path d="M1670.6,122 v16 M1673.2,122 v16" stroke="#cfcfcf" stroke-width="1"/></svg>
<!-- legend -->
<div class="abs" style="left:829px;top:819px;width:262px;height:39px;background:#f7f7f7;border-radius:3px"></div>
<div class="abs" style="left:764px;top:867px;width:392px;height:62px;background:#f6f6f6;border-radius:3px"></div>
<span class="t" style="left:845.8px;top:831.4px;font-size:13.6px;line-height:16px;letter-spacing:-0.053px;color:#3d3d3d;-webkit-text-stroke:.25px #3d3d3d;">Velocity Magnitude</span>
<span class="t" style="left:1003.8px;top:831.7px;font-size:12.6px;line-height:15px;letter-spacing:-0.165px;color:#666;">m/s</span>
<span class="t" style="left:807.2px;top:871.8px;font-size:10.6px;line-height:13px;letter-spacing:-0.236px;color:#7a7a7a;-webkit-text-stroke:0;">0</span>
<span class="t" style="left:862.9px;top:871.8px;font-size:10.6px;line-height:13px;letter-spacing:-0.196px;color:#33272d;-webkit-text-stroke:0;">3.4</span>
<span class="t" style="left:922.9px;top:871.8px;font-size:10.6px;line-height:13px;letter-spacing:-0.196px;color:#33272d;-webkit-text-stroke:0;">6.8</span>
<span class="t" style="left:980.1px;top:871.8px;font-size:10.6px;line-height:13px;letter-spacing:-0.206px;color:#33272d;-webkit-text-stroke:0;">10.2</span>
<span class="t" style="left:1040.1px;top:871.8px;font-size:10.6px;line-height:13px;letter-spacing:-0.206px;color:#33272d;-webkit-text-stroke:0;">13.6</span>
<span class="t" style="left:1104.3px;top:871.8px;font-size:10.6px;line-height:13px;letter-spacing:-0.236px;color:#7a7a7a;-webkit-text-stroke:0;">17</span>
<svg class="abs" style="left:760px;top:815px" width="400" height="114" viewBox="760 815 400 114"><defs><linearGradient id="cb" x1="0" x2="1" y1="0" y2="0"><stop offset="0" stop-color="#010103"/><stop offset="0.03" stop-color="#0b0822"/><stop offset="0.07" stop-color="#1e1460"/><stop offset="0.11" stop-color="#2a1a84"/><stop offset="0.17" stop-color="#3c1a8c"/><stop offset="0.23" stop-color="#641a92"/><stop offset="0.28" stop-color="#8c1a94"/><stop offset="0.33" stop-color="#b21a90"/><stop offset="0.38" stop-color="#c2248a"/><stop offset="0.42" stop-color="#cc3270"/><stop offset="0.46" stop-color="#d84848"/><stop offset="0.5" stop-color="#e05a2a"/><stop offset="0.58" stop-color="#e2661f"/><stop offset="0.63" stop-color="#e98418"/><stop offset="0.7" stop-color="#f29a12"/><stop offset="0.76" stop-color="#fbb40c"/><stop offset="0.82" stop-color="#fcc016"/><stop offset="0.87" stop-color="#f6dc48"/><stop offset="0.91" stop-color="#f5e35a"/><stop offset="0.95" stop-color="#fbf4a6"/><stop offset="0.975" stop-color="#fffef4"/><stop offset="1" stop-color="#ffffff"/></linearGradient></defs><circle cx="970.4" cy="839.6" r="6.6" fill="#fff" stroke="#cfcfcf" stroke-width="1"/><path d="M967.6,837.4 h5.6 M967.6,839.6 h5.6 M967.6,841.8 h5.6" stroke="#555" stroke-width="1"/><path d="M1067.4,837.2 l3.6,3.8 l3.6,-3.8" fill="none" stroke="#777" stroke-width="1.1"/><path d="M999,854.4 h80" stroke="#e4e4e4" stroke-width="1"/><path d="M803,885.6 h14.4 M1099.6,885.6 h21" stroke="#e6e6e6" stroke-width="1"/><path d="M822,891.8 V897 M834,891.8 V897 M846,891.8 V897 M858,891.8 V897 M882,891.8 V897 M894,891.8 V897 M906,891.8 V897 M918,891.8 V897 M942,891.8 V897 M954,891.8 V897 M966,891.8 V897 M978,891.8 V897 M1002,891.8 V897 M1014,891.8 V897 M1026,891.8 V897 M1038,891.8 V897 M1062,891.8 V897 M1074,891.8 V897 M1086,891.8 V897 M1098,891.8 V897" stroke="#b0b0b0" stroke-width="1.2"/><path d="M870,888 V897 M930,888 V897 M990,888 V897 M1050,888 V897" stroke="#555" stroke-width="1.2"/><path d="M810,888 V897 M1110,888 V897" stroke="#8a8a8a" stroke-width="1"/><rect x="810" y="897" width="300" height="14.8" fill="url(#cb)"/><path d="M810,913.2 l6,7.8 h-12z M1110,913.2 l6,7.8 h-12z" fill="#000"/></svg>
<!-- cube -->
<div class="abs" style="left:1880px;top:719px;width:40px;height:40px;background:#0573a9;border-radius:3px 0 0 3px"></div>
<svg class="abs" style="left:1720px;top:700px" width="200" height="229" viewBox="1720 700 200 229" font-family="Liberation Sans, sans-serif"><path d="M1900.4,732.6 c4,0 7,2.5 7,5.6 c0,3.1 -3,5.6 -7,5.6 c-1.2,0 -2.3,-.2 -3.3,-.6 c-1,.8 -2.300,1.200 -3.700,1.200 c.8,-.8 1.200,-1.700 1.300,-2.700 c-.9,-1 -1.300,-2.200 -1.300,-3.500 c0,-3.100 3,-5.600 7,-5.600z" fill="#fff"/><g fill="none" stroke="#555" stroke-width="1.1"><path d="M1817.2,756 l4.600,-4.400 l4.600,4.400"/><path d="M1817.2,902 l4.600,4.400 l4.600,-4.400"/><path d="M1748.800,824.400 l-4.400,4.600 l4.400,4.600"/><path d="M1895.400,824.400 l4.400,4.600 l-4.400,4.600"/></g><g fill="none" stroke="#555" stroke-width="1.1"><rect x="1760.400" y="775.600" width="8" height="8.600" rx="1.400"/><path d="M1768.400,778.400 l3.400,-1.800 v6.800 l-3.400,-1.800"/></g><g fill="none" stroke="#555" stroke-width="1.1"><path d="M1865.400,780.600 l5.600,-5.400 l5.600,5.400"/><path d="M1867,779.600 v6 h2.800 v-3.600 h2.400 v3.600 h2.800 v-6"/></g><g fill="none" stroke="#555" stroke-width="1"><path d="M1765.500,876.200 a6.400,6.400 0 1 1 -2.200,7.600"/><path d="M1871.500,875 a6.400,6.400 0 1 0 5.800,3.400"/></g><path d="M1762,878.600 l4.200,1 l-2.800,2.800z M1879.200,876.400 l-.6,4.400 l-3.400,-2.400z" fill="#555"/><g fill="#f3f3f3" fill-opacity=".6" stroke="#a0a0a0" stroke-width="1"><path d="M1814.500,779.400 L1862.500,801.100 L1825.500,830 L1777.500,809.200z"/><path d="M1777.500,809.200 L1825.500,830 V878 L1777.500,856.600z"/><path d="M1825.500,830 L1862.500,801.100 V848 L1825.500,878z"/></g><path d="M1814.500,779.400 V827 L1777.500,856.600 M1814.500,827 L1862.500,848" fill="none" stroke="#c4c4c4" stroke-width="1" stroke-dasharray="3 2.400"/><text transform="matrix(.9,.4,0,1,1787.500,838.500)" font-size="8.200" fill="#8a8a8a" letter-spacing=".2">FRONT</text><text transform="matrix(.78,-.6,0,1,1836.500,851.500)" font-size="7.600" fill="#8a8a8a">RIGHT</text><text transform="matrix(.9,.3,-.5,.55,1812.500,802.500)" font-size="8" fill="#8a8a8a">TOP</text><path d="M1825.500,883.700 V816" stroke="#5aa5dc" stroke-width="1.200"/><path d="M1825.500,811.600 l-1.800,7 h3.600z" fill="#5aa5dc"/><path d="M1825.500,883.700 L1878,843.800" stroke="#f07878" stroke-width="1.200"/><path d="M1881.500,841 l-6.800,2.800 l2.200,2.900z" fill="#f07878"/><path d="M1825.500,883.700 L1756.600,852.600" stroke="#6ce86c" stroke-width="1.200"/><path d="M1752.800,850.900 l5.800,4.600 l1.500,-3.300z" fill="#6ce86c"/><text x="1822.200" y="806.400" font-size="13.500" fill="#3d8fd0">Z</text><text x="1884" y="839" font-size="13.500" fill="#e04848">X</text><text x="1740.200" y="848.800" font-size="13.500" fill="#52e052">y</text></svg>
</body>
</html>
